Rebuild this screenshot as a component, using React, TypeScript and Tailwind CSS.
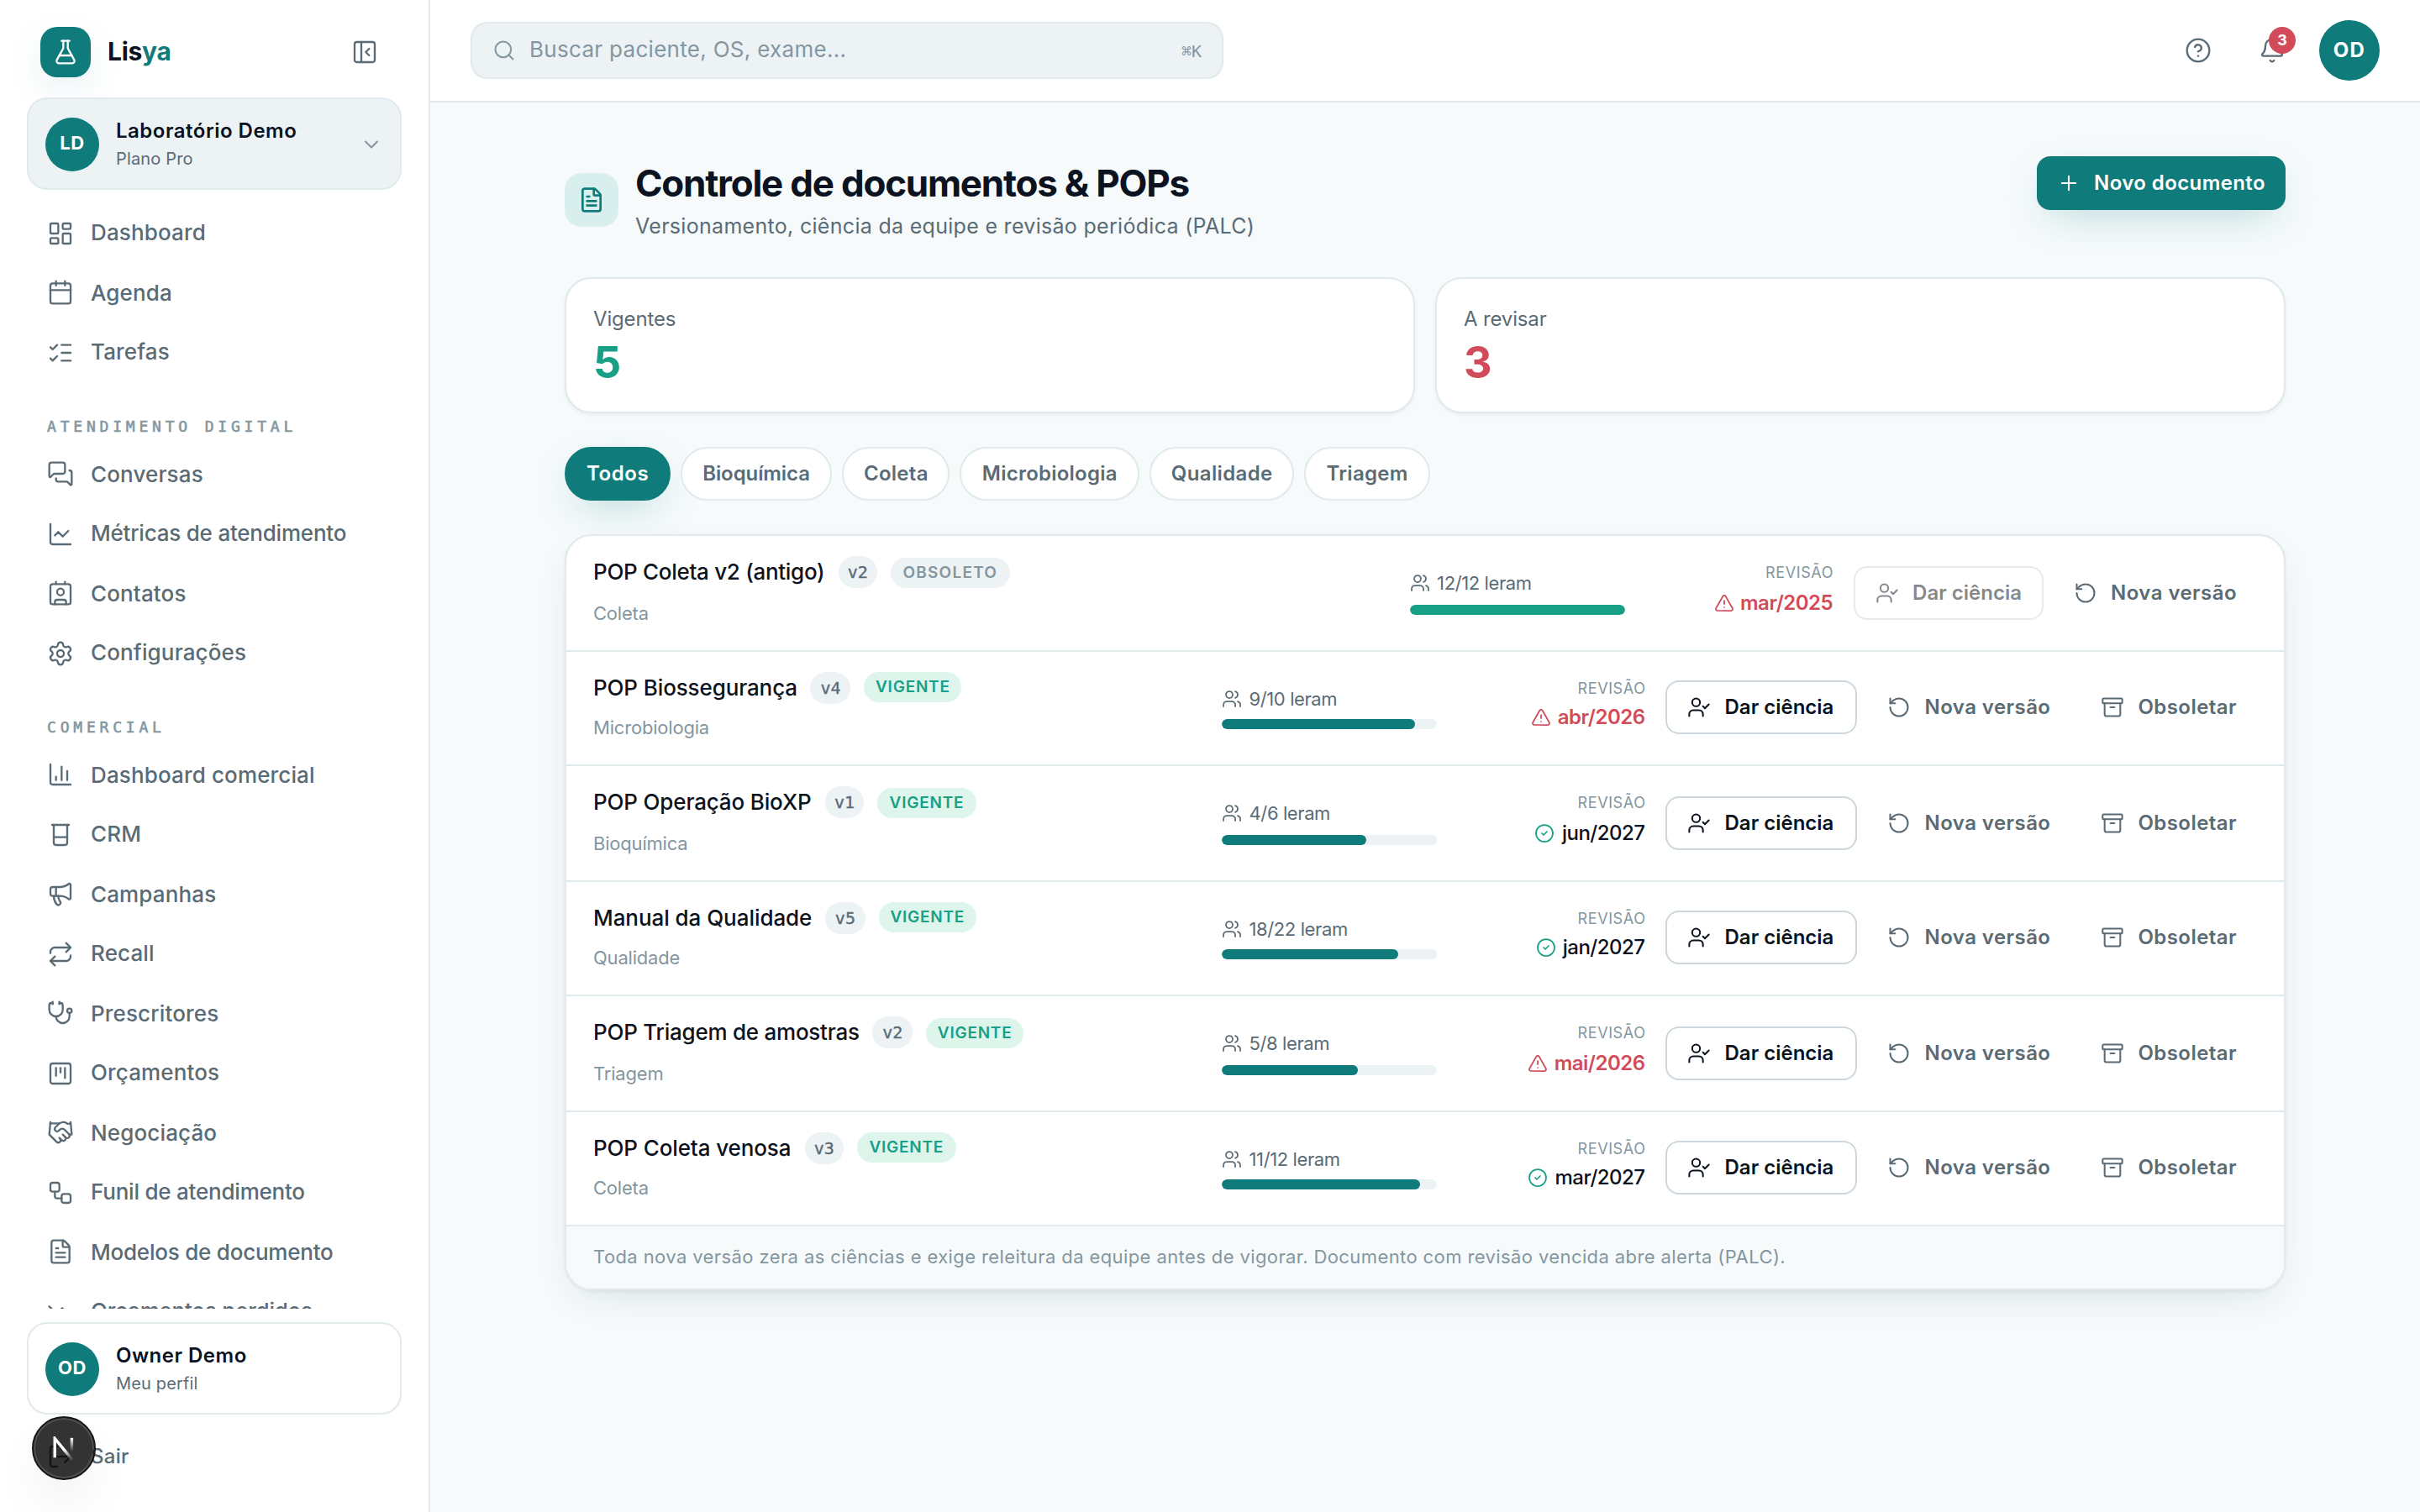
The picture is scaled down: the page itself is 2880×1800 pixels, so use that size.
import type { ReactNode } from "react";
import {
  Archive,
  Beaker,
  Bell,
  Calendar,
  ChartColumn,
  ChartLine,
  ChevronDown,
  CircleCheck,
  CircleQuestionMark,
  Contact,
  FileText,
  FlaskConical,
  Handshake,
  LayoutDashboard,
  ListChecks,
  LogOut,
  Megaphone,
  MessagesSquare,
  PanelLeftClose,
  Plus,
  Repeat,
  RotateCcw,
  Search,
  Settings,
  SquareKanban,
  Stethoscope,
  TrendingDown,
  TriangleAlert,
  UserCheck,
  Users,
  Workflow,
  type LucideIcon,
} from "lucide-react";

type NavEntry = { label: string; icon: LucideIcon; tight?: boolean };

const mainNav: NavEntry[] = [
  { label: "Dashboard", icon: LayoutDashboard },
  { label: "Agenda", icon: Calendar },
  { label: "Tarefas", icon: ListChecks },
];

const digitalNav: NavEntry[] = [
  { label: "Conversas", icon: MessagesSquare },
  { label: "Métricas de atendimento", icon: ChartLine, tight: true },
  { label: "Contatos", icon: Contact },
  { label: "Configurações", icon: Settings },
];

const commercialNav: NavEntry[] = [
  { label: "Dashboard comercial", icon: ChartColumn },
  { label: "CRM", icon: Beaker },
  { label: "Campanhas", icon: Megaphone },
  { label: "Recall", icon: Repeat },
  { label: "Prescritores", icon: Stethoscope },
  { label: "Orçamentos", icon: SquareKanban },
  { label: "Negociação", icon: Handshake },
  { label: "Funil de atendimento", icon: Workflow, tight: true },
  { label: "Modelos de documento", icon: FileText, tight: true },
  { label: "Orçamentos perdidos", icon: TrendingDown, tight: true },
];

type Doc = {
  title: string;
  tracking: string;
  version: string;
  category: string;
  obsolete?: boolean;
  read: number;
  total: number;
  review: string;
  overdue: boolean;
};

const docs: Doc[] = [
  { title: "POP Coleta v2 (antigo)", tracking: "tracking-[-0.15px]", version: "v2", category: "Coleta", obsolete: true, read: 12, total: 12, review: "mar/2025", overdue: true },
  { title: "POP Biossegurança", tracking: "tracking-[-0.06px]", version: "v4", category: "Microbiologia", read: 9, total: 10, review: "abr/2026", overdue: true },
  { title: "POP Operação BioXP", tracking: "tracking-[-0.08px]", version: "v1", category: "Bioquímica", read: 4, total: 6, review: "jun/2027", overdue: false },
  { title: "Manual da Qualidade", tracking: "tracking-[-0.03px]", version: "v5", category: "Qualidade", read: 18, total: 22, review: "jan/2027", overdue: false },
  { title: "POP Triagem de amostras", tracking: "tracking-[-0.12px]", version: "v2", category: "Triagem", read: 5, total: 8, review: "mai/2026", overdue: true },
  { title: "POP Coleta venosa", tracking: "tracking-[-0.06px]", version: "v3", category: "Coleta", read: 11, total: 12, review: "mar/2027", overdue: false },
];

const filters = [
  { label: "Todos", tracking: "tracking-[0.28px]" },
  { label: "Bioquímica", tracking: "tracking-[-0.04px]" },
  { label: "Coleta", tracking: "tracking-[0.14px]" },
  { label: "Microbiologia", tracking: "tracking-[0.12px]" },
  { label: "Qualidade", tracking: "tracking-[0.18px]" },
  { label: "Triagem", tracking: "tracking-[0.14px]" },
];

function NavItem({ label, icon: Icon, tight }: NavEntry) {
  return (
    <a
      className={`flex h-[35.5px] shrink-0 items-center gap-2.5 px-3 text-[13px] font-medium text-[#5a6b75] ${
        tight ? "tracking-[-0.11px]" : "tracking-[0.07px]"
      }`}
    >
      <Icon size={16} strokeWidth={1.75} className="shrink-0" />
      {label}
    </a>
  );
}

function NavHeading({ children }: { children: ReactNode }) {
  return (
    <p className="h-[37px] shrink-0 px-3 pt-[20.5px] font-['DejaVu_Sans_Mono',monospace] text-[9px] leading-[13.5px] tracking-[2.4px] text-[#8496a0] uppercase [-webkit-text-stroke:0.3px]">
      {children}
    </p>
  );
}

function Avatar({ initials }: { initials: string }) {
  return (
    <span className="flex size-8 shrink-0 items-center justify-center rounded-full bg-[#0f7b7a] text-[11px] font-bold tracking-[0.35px] text-white">
      {initials}
    </span>
  );
}

function Identity({ name, detail }: { name: string; detail: string }) {
  return (
    <div className="flex-1">
      <p className="text-[12px] leading-[18px] font-semibold tracking-[0.25px] text-[#0b1220]">{name}</p>
      <p className="text-[10px] leading-[15px] tracking-[0.08px] text-[#5a6b75]">{detail}</p>
    </div>
  );
}

function Sidebar() {
  return (
    <aside className="flex h-full w-64 shrink-0 flex-col border-r border-[#e0eaed] bg-white px-4">
      <div className="mt-4 flex h-[30px] shrink-0 items-center px-2">
        <span className="flex size-[30px] items-center justify-center rounded-[10px] bg-[#0f7b7a] text-white shadow-[0_8px_24px_-8px_rgba(15,123,122,0.35)]">
          <FlaskConical size={16} strokeWidth={1.75} />
        </span>
        <span className="ml-2.5 text-[15px] font-bold tracking-[-0.15px] text-[#0b1220]">
          Lis<span className="text-[#0f7b7a]">ya</span>
        </span>
        <span className="ml-auto flex size-7 items-center justify-center text-[#5a6b75]">
          <PanelLeftClose size={16} strokeWidth={1.75} />
        </span>
      </div>

      <div className="mt-3 flex h-[55px] shrink-0 items-center gap-2.5 rounded-xl border border-[#e0eaed] bg-[#edf2f5] px-2.5">
        <Avatar initials="LD" />
        <Identity name="Laboratório Demo" detail="Plano Pro" />
        <ChevronDown size={14} strokeWidth={1.75} className="text-[#8496a0]" />
      </div>

      <nav className="mt-2 flex min-h-0 flex-1 flex-col overflow-hidden">
        {mainNav.map((n) => (
          <NavItem key={n.label} {...n} />
        ))}
        <NavHeading>Atendimento digital</NavHeading>
        {digitalNav.map((n) => (
          <NavItem key={n.label} {...n} />
        ))}
        <NavHeading>Comercial</NavHeading>
        {commercialNav.map((n) => (
          <NavItem key={n.label} {...n} />
        ))}
      </nav>

      <div className="mt-2 flex h-[55px] shrink-0 items-center gap-2.5 rounded-xl border border-[#e0eaed] bg-white px-2.5">
        <Avatar initials="OD" />
        <Identity name="Owner Demo" detail="Meu perfil" />
      </div>
      <a className="mt-2 mb-4 flex h-[34px] shrink-0 items-center gap-2.5 px-3 text-[12px] font-medium tracking-[0.15px] text-[#5a6b75]">
        <LogOut size={16} strokeWidth={1.75} />
        Sair
      </a>
    </aside>
  );
}

function Topbar() {
  return (
    <header className="flex h-[61px] shrink-0 items-center border-b border-[#e0eaed] bg-white px-6">
      <div className="flex h-[34px] w-[448px] items-center gap-2 rounded-[10px] border border-[#e0eaed] bg-[#edf2f5] px-3 text-[#8496a0]">
        <Search size={14} strokeWidth={1.75} />
        <span className="flex-1 text-[13px] tracking-[0.15px]">Buscar paciente, OS, exame...</span>
        <kbd className="font-['DejaVu_Sans_Mono',monospace] text-[10px]">⌘K</kbd>
      </div>
      <div className="ml-auto flex items-center gap-2 text-[#5a6b75]">
        <span className="flex size-9 items-center justify-center">
          <CircleQuestionMark size={16} strokeWidth={1.75} />
        </span>
        <span className="relative flex size-9 items-center justify-center">
          <Bell size={16} strokeWidth={1.75} />
          <span className="absolute top-1 right-1 flex size-4 items-center justify-center rounded-full bg-[#d14b5b] text-[9px] font-bold text-white">
            3
          </span>
        </span>
        <span className="ml-0.5 flex size-9 items-center justify-center rounded-full bg-[#0f7b7a] text-[12px] font-bold tracking-[0.7px] text-white">
          OD
        </span>
      </div>
    </header>
  );
}

function Stat({ label, value, tone }: { label: string; value: number; tone: string }) {
  return (
    <div className="h-[81px] rounded-2xl border border-[#e0eaed] bg-white p-4 shadow-[0_1px_2px_rgba(15,40,60,0.06)]">
      <p className="text-[12px] leading-[15px] tracking-[-0.08px] text-[#5a6b75]">{label}</p>
      <p className={`mt-[3px] text-[26px] leading-[31px] font-bold ${tone}`}>{value}</p>
    </div>
  );
}

function GhostButton({ icon: Icon, children }: { icon: LucideIcon; children: ReactNode }) {
  return (
    <button className="flex h-8 items-center gap-2 px-3 text-[12px] font-semibold tracking-[0.22px] text-[#5a6b75]">
      <Icon size={14} strokeWidth={1.75} />
      {children}
    </button>
  );
}

function DocRow({ doc }: { doc: Doc }) {
  const complete = doc.read === doc.total;
  return (
    <div className="flex h-[68.5px] items-center gap-3 px-4 last:h-[67.5px]">
      <div className="h-[43.5px] flex-1">
        <div className="flex h-[19.5px] items-center gap-2">
          <span className={`text-[13px] font-medium text-[#0b1220] ${doc.tracking}`}>{doc.title}</span>
          <span className="flex h-[19px] items-center rounded-full bg-[#edf2f5] px-[5.75px] font-['DejaVu_Sans_Mono',monospace] text-[10px] text-[#5a6b75] [-webkit-text-stroke:0.2px]">
            {doc.version}
          </span>
          <span
            className={`flex h-[18px] items-center rounded-full px-[7px] text-[9.5px] font-semibold ${
              doc.obsolete
                ? "bg-[#edf2f5] tracking-[0.62px] text-[#8496a0]"
                : "bg-[#def5ec] tracking-[0.38px] text-[#17a086]"
            }`}
          >
            {doc.obsolete ? "OBSOLETO" : "VIGENTE"}
          </span>
        </div>
        <p className="mt-1.5 text-[11px] leading-[16.5px] tracking-[-0.1px] text-[#8496a0]">{doc.category}</p>
      </div>

      <div className="w-32 pb-px">
        <p className="flex items-center gap-1 text-[11px] leading-[16.5px] tracking-[-0.2px] text-[#5a6b75]">
          <Users size={12} strokeWidth={1.75} />
          {doc.read}/{doc.total} leram
        </p>
        <div className="mt-1 h-1.5 overflow-hidden rounded-full bg-[#edf2f5]">
          <div
            className={`h-full rounded-full ${complete ? "bg-[#17a086]" : "bg-[#0f7b7a]"}`}
            style={{ width: `${Math.round((doc.read / doc.total) * 100)}%` }}
          />
        </div>
      </div>

      <div className="flex w-28 flex-col items-end pb-[4.5px]">
        <p className="text-[9px] leading-[15px] tracking-[0.3px] text-[#8496a0]">REVISÃO</p>
        <p
          className={`mt-[1.5px] mr-[0.5px] flex items-center gap-1 text-[12px] leading-[18px] tracking-[-0.25px] ${
            doc.overdue ? "font-semibold text-[#d14b5b]" : "font-medium text-[#0b1220]"
          }`}
        >
          {doc.overdue ? (
            <TriangleAlert size={12} strokeWidth={1.75} />
          ) : (
            <CircleCheck size={12} strokeWidth={1.75} className="text-[#17a086]" />
          )}
          {doc.review}
        </p>
      </div>

      <div className="flex gap-1.5">
        <button
          className={`flex h-8 items-center gap-2 rounded-lg border border-[#ccd7de] bg-white px-3 text-[12px] font-semibold whitespace-nowrap text-[#0b1220] ${
            doc.obsolete ? "w-[113px] opacity-50" : "w-[114px]"
          }`}
        >
          <UserCheck size={14} strokeWidth={1.75} />
          Dar ciência
        </button>
        <GhostButton icon={RotateCcw}>Nova versão</GhostButton>
        {!doc.obsolete && <GhostButton icon={Archive}>Obsoletar</GhostButton>}
      </div>
    </div>
  );
}

function DevBadge() {
  return (
    <div className="absolute bottom-[19px] left-[19px] flex size-[38px] items-center justify-center rounded-full border border-[#171717] bg-black/80 shadow-[inset_0_0_0_1px_rgba(255,255,255,0.14),0_16px_32px_-8px_rgba(0,0,0,0.14)]">
      <svg width="14" height="15" viewBox="0 0 14 15" fill="none">
        <defs>
          <linearGradient id="diag" x1="7.5" y1="8" x2="12.5" y2="14" gradientUnits="userSpaceOnUse">
            <stop stopColor="#fff" />
            <stop offset="1" stopColor="#fff" stopOpacity="0" />
          </linearGradient>
          <linearGradient id="stem" x1="11.7" y1="1" x2="11.7" y2="9" gradientUnits="userSpaceOnUse">
            <stop stopColor="#fff" />
            <stop offset="1" stopColor="#fff" stopOpacity="0" />
          </linearGradient>
        </defs>
        <path d="M1.6 12.6V1.2L12.6 14.6" stroke="url(#diag)" strokeWidth="1.7" />
        <path d="M11.7 0.9V8.6" stroke="url(#stem)" strokeWidth="1.7" />
      </svg>
    </div>
  );
}

export default function App() {
  return (
    <div className="h-[1800px] w-[2880px] overflow-hidden">
      <div className="relative flex h-[900px] w-[1440px] origin-top-left scale-200 bg-[#f6fafb] font-['Inter',sans-serif] leading-normal">
        <Sidebar />
        <div className="flex flex-1 flex-col">
          <Topbar />
          <main className="mx-auto flex w-[1024px] flex-col gap-5 pt-8">
            <div className="flex h-[52px] items-start justify-between">
              <div className="flex items-center gap-2.5">
                <span className="flex size-8 items-center justify-center rounded-[10px] bg-[#d9efed] text-[#0f7b7a]">
                  <FileText size={16} strokeWidth={2} />
                </span>
                <div>
                  <h1 className="text-[22px] leading-[33px] font-bold tracking-[-0.62px] text-[#0b1220]">
                    Controle de documentos &amp; POPs
                  </h1>
                  <p className="text-[12.5px] leading-[18px] tracking-[0.15px] text-[#5a6b75]">
                    Versionamento, ciência da equipe e revisão periódica (PALC)
                  </p>
                </div>
              </div>
              <button className="flex h-8 items-center gap-2 rounded-lg bg-[#0f7b7a] px-3 text-[12px] font-semibold tracking-[0.2px] text-white shadow-[0_8px_24px_-8px_rgba(15,123,122,0.35)]">
                <Plus size={14} strokeWidth={1.75} />
                Novo documento
              </button>
            </div>

            <div className="grid grid-cols-2 gap-3">
              <Stat label="Vigentes" value={5} tone="text-[#17a086]" />
              <Stat label="A revisar" value={3} tone="text-[#d14b5b]" />
            </div>

            <div className="flex gap-1.5">
              {filters.map((f, i) => (
                <button
                  key={f.label}
                  className={`flex h-8 items-center rounded-full border px-3 text-[12px] font-semibold ${f.tracking} ${
                    i === 0
                      ? "border-[#0f7b7a] bg-[#0f7b7a] text-white shadow-[0_8px_24px_-8px_rgba(15,123,122,0.35)]"
                      : "border-[#e0eaed] bg-white text-[#5a6b75]"
                  }`}
                >
                  {f.label}
                </button>
              ))}
            </div>

            <section className="overflow-hidden rounded-2xl border border-[#e0eaed] bg-white shadow-[0_1px_2px_rgba(15,40,60,0.05),0_8px_24px_-8px_rgba(15,40,60,0.14)]">
              <div className="divide-y divide-[#e0eaed]">
                {docs.map((d) => (
                  <DocRow key={d.title} doc={d} />
                ))}
              </div>
              <p className="border-t border-[#e0eaed] bg-[#f6fafb] px-4 py-2.5 text-[11px] leading-[16.5px] tracking-[0.2px] text-[#8496a0]">
                Toda nova versão zera as ciências e exige releitura da equipe antes de vigorar. Documento com revisão vencida abre alerta (PALC).
              </p>
            </section>
          </main>
        </div>
        <DevBadge />
      </div>
    </div>
  );
}
